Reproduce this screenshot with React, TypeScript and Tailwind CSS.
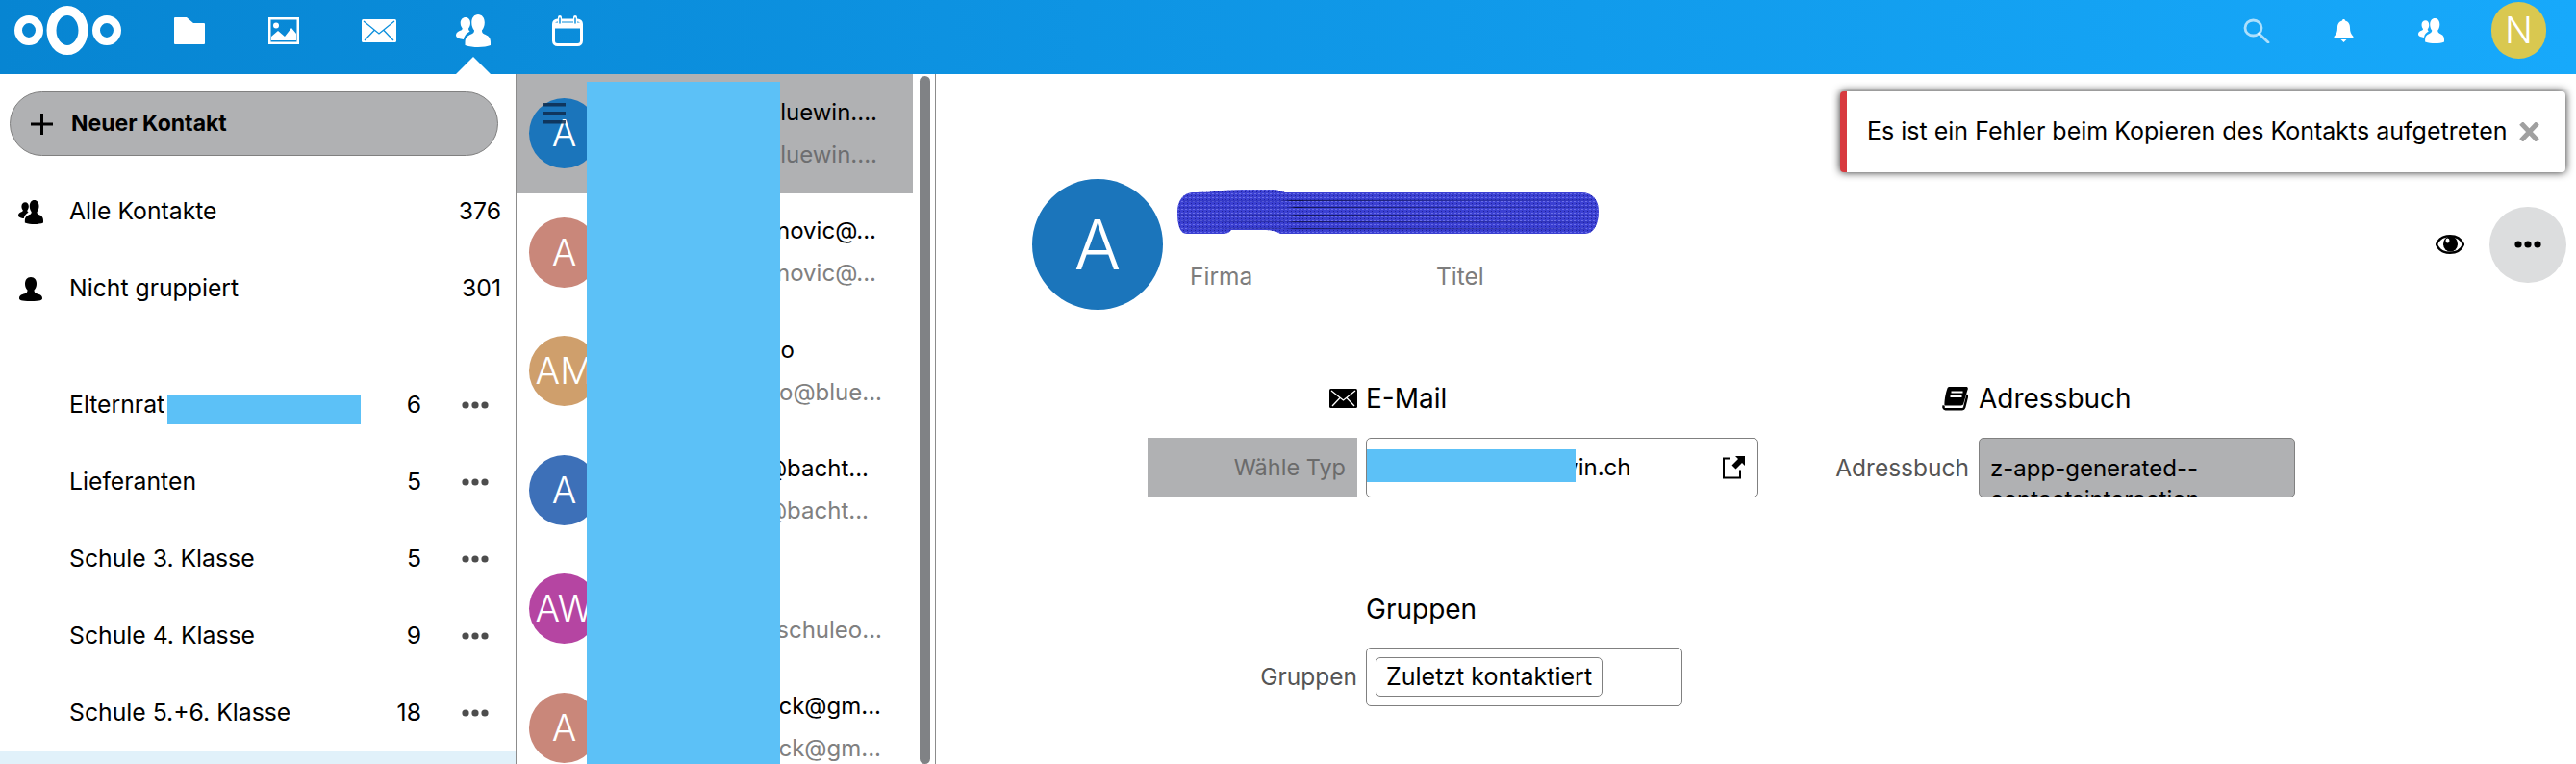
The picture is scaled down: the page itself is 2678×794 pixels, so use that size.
const groups = [
  { name: "Elternrat", count: 6, redacted: true },
  { name: "Lieferanten", count: 5 },
  { name: "Schule 3. Klasse", count: 5 },
  { name: "Schule 4. Klasse", count: 9 },
  { name: "Schule 5.+6. Klasse", count: 18 },
];

const contacts = [
  { initials: "A", color: "bg-[#1b75bb]", top: "bluewin....", topPad: "pr-[37px]", sub: "bluewin....", subPad: "pr-[37px]", selected: true },
  { initials: "A", color: "bg-[#c9877a]", top: "novic@...", topPad: "pr-[38px]", sub: "novic@...", subPad: "pr-[38px]" },
  { initials: "AM", color: "bg-[#cf9f6c]", top: "o", topPad: "pr-[123px]", sub: "o@blue...", subPad: "pr-[32px]" },
  { initials: "A", color: "bg-[#3d70b8]", top: "@bacht...", topPad: "pr-[46px]", sub: "@bacht...", subPad: "pr-[46px]" },
  { initials: "AW", color: "bg-[#b545a2]", top: "", topPad: "", sub: "schuleo...", subPad: "pr-[32px]" },
  { initials: "A", color: "bg-[#c9877a]", top: "ck@gm...", topPad: "pr-[33px]", sub: "ck@gm...", subPad: "pr-[33px]" },
];

function Logo() {
  return (
    <svg width="111" height="51" viewBox="0 0 111 51" fill="none" stroke="white">
      <ellipse cx="15" cy="25.5" rx="11" ry="11.5" strokeWidth="8" />
      <ellipse cx="55" cy="25.5" rx="16.5" ry="20.5" strokeWidth="10" />
      <ellipse cx="96" cy="25.5" rx="11" ry="11.5" strokeWidth="8" />
    </svg>
  );
}

function ContactsIcon({ w, h, fill = "white" }: { w: number; h: number; fill?: string }) {
  return (
    <svg width={w} height={h} viewBox="0 0 36 34" preserveAspectRatio="none" fill={fill}>
      <path d="M23 0c4 0 6.800 3.500 6.800 8.500 0 3.500-1.200 6-2.800 8 0 2 .5 3 2.500 4 3.500 1.400 6.500 3 6.500 8.500V32c-3 1.300-8 2-13 2-4.500 0-9-.5-13.500-2v-3c0-5 3-7 6.500-8.500 2.200-1 3-2 3-4-1.600-2-2.700-4.500-2.700-8C16.300 3.500 19 0 23 0z" />
      <path d="M10 3c3 0 5 2.400 5 6 0 2.400-.9 4.300-2 5.700 0 1.300.5 2 1.600 2.700-3 1.800-6.100 4.200-6.600 8.600-3.500-.5-8-1.500-8-4.500 0-2.500 2.400-3.800 4.400-4.700 1.700-.7 2.300-1.300 2.300-2.400-1.100-1.400-2-3.300-2-5.700C4.700 5.400 7 3 10 3z" />
    </svg>
  );
}

function Dots({ color = "#4d4d4d" }: { color?: string }) {
  return (
    <svg width="28" height="8" viewBox="0 0 28 8" fill={color}>
      <ellipse cx="4" cy="4" rx="3.600" ry="3.600" />
      <ellipse cx="14" cy="4" rx="3.600" ry="3.600" />
      <ellipse cx="24" cy="4" rx="3.600" ry="3.600" />
    </svg>
  );
}

function TopBar() {
  return (
    <header className="relative flex h-[77px] shrink-0 items-center bg-linear-to-r from-[#0785d2] to-[#17a9fb] pb-[14px] pl-[15px] pr-[31px]">
      <Logo />
      <nav className="ml-[55px] flex items-center">
        <svg width="32" height="28" viewBox="0 0 32 28" fill="white">
          <path d="M0 1a1 1 0 0 1 1-1h12l7 6h11a1 1 0 0 1 1 1v20a1 1 0 0 1-1 1H1a1 1 0 0 1-1-1z" />
        </svg>
        <svg className="ml-[66px]" width="32" height="28" viewBox="0 0 32 28" fill="white">
          <path fillRule="evenodd" d="M0 0h32v28H0zM2.500 2.500v23h27v-23z" />
          <ellipse cx="8" cy="8.500" rx="3" ry="3" />
          <path d="M3 24v-4l7-6 7 6 7-9 5 6v7z" />
        </svg>
        <svg className="ml-[65px]" width="36" height="24" viewBox="0 0 36 24" fill="white" stroke="#0b8fdd" strokeWidth="1.300">
          <rect x="0" y="0" width="36" height="24" rx="1.500" stroke="none" />
          <path d="M2 2l16 13L34 2M3 22l10.500-11M33 22L22.500 11" fill="none" />
        </svg>
        <div className="ml-[62px] flex">
          <ContactsIcon w={36} h={34} />
        </div>
        <svg className="ml-[64px]" width="32" height="32" viewBox="0 0 32 32" fill="none" stroke="white">
          <rect x="1.500" y="5" width="29" height="25.500" rx="4" strokeWidth="3" />
          <path d="M1.500 10.500h29" strokeWidth="6" />
          <path d="M8 2v7M24 2v7" stroke="white" strokeWidth="4" strokeLinecap="round" />
          <path d="M8 3v5M24 3v5" stroke="#0d93e0" strokeWidth="1.500" strokeLinecap="round" />
        </svg>
      </nav>
      <div className="absolute bottom-0 left-[474px] h-[18px] w-[36px] bg-white [clip-path:polygon(50%_0,100%_100%,0_100%)]" />
      <div className="ml-auto flex items-center">
        <svg width="28" height="26" viewBox="0 0 28 26" fill="none" stroke="white" strokeOpacity="0.65" strokeWidth="2.800">
          <ellipse cx="10.500" cy="10" rx="8.500" ry="8" />
          <path d="M16.500 16l9.500 9" strokeLinecap="round" />
        </svg>
        <svg className="ml-[66px]" width="21" height="24" viewBox="0 0 21 24" fill="white">
          <path d="M10.500 0c1 0 1.500.7 1.500 1.600 3.600.8 5 3.800 5 7.400 0 4 1 6 3.500 9v1H.5v-1C3 15 4 13 4 9c0-3.600 1.400-6.600 5-7.400C9 .7 9.500 0 10.500 0z" />
          <path d="M7.500 21h6l-3 3z" />
        </svg>
        <div className="ml-[67px] flex">
          <ContactsIcon w={27} h={26} />
        </div>
        <div className="ml-[49px] flex h-[59px] w-[57px] items-center justify-center rounded-full bg-[#d9c850] text-[38px] font-light text-white">
          N
        </div>
      </div>
    </header>
  );
}

function Sidebar() {
  return (
    <aside className="flex w-[537px] shrink-0 flex-col border-r border-[#8c8c8c] text-[24.750px] text-black">
      <button className="mx-[10px] mt-[18px] flex h-[67px] w-[508px] items-center rounded-full border border-[#808080] bg-[#b0b1b3] pl-[21px] font-bold">
        <svg width="23" height="22" viewBox="0 0 23 22" stroke="black" strokeWidth="3">
          <path d="M0 11h23M11.500 0v22" />
        </svg>
        <span className="ml-[19px] text-[23px]">Neuer Kontakt</span>
      </button>
      <div className="mt-[18px] flex h-[80px] items-center pl-[19px] pr-[15px]">
        <ContactsIcon w={26} h={25} fill="black" />
        <span className="ml-[27px] flex-1">Alle Kontakte</span>
        <span>376</span>
      </div>
      <div className="flex h-[80px] items-center pl-[20px] pr-[15px]">
        <svg width="24" height="25" viewBox="0 0 24 25" fill="black">
          <path d="M12 0c4 0 6 3 6 7 0 3-1 5-2.500 6.500 0 2 .5 3 3 3.800C21.500 18.200 24 19 24 22c0 2-1.500 3-12 3S0 24 0 22c0-3 2.500-3.800 5.500-4.700 2.500-.8 3-1.800 3-3.800C7 12 6 10 6 7c0-4 2-7 6-7z" />
        </svg>
        <span className="ml-[28px] flex-1">Nicht gruppiert</span>
        <span>301</span>
      </div>
      <div className="mt-[41px]">
        {groups.map((g) => (
          <div key={g.name} className="flex h-[80px] items-center pl-[72px]">
            <span>{g.name}</span>
            {g.redacted && <div className="ml-[3px] mt-[9px] h-[31px] w-[201px] bg-[#5cc1f7]" />}
            <span className="ml-auto">{g.count}</span>
            <div className="ml-[42px] mr-[28px] flex">
              <Dots />
            </div>
          </div>
        ))}
      </div>
      <div className="min-h-0 flex-1 bg-[#e1f1fa]" />
    </aside>
  );
}

function ContactList() {
  return (
    <section className="relative flex w-[436px] shrink-0 overflow-hidden border-r border-[#8c8c8c] text-[24px]">
      <div className="w-[412px] shrink-0">
        {contacts.map((c, i) => (
          <div key={i} className={`flex h-[123.500px] items-center pl-[13px] ${c.selected ? "bg-[#b0b1b3]" : ""}`}>
            <div className={`flex h-[73px] w-[73px] shrink-0 items-center justify-center rounded-full text-[38px] font-light text-white ${c.color}`}>
              {c.initials}
            </div>
            <div className="min-w-0 flex-1 overflow-hidden whitespace-nowrap text-right leading-[44px]">
              <div className={`h-[44px] text-black ${c.topPad}`}>{c.top}</div>
              <div className={`h-[44px] ${c.selected ? "text-[#6d6e70]" : "text-[#808080]"} ${c.subPad}`}>{c.sub}</div>
            </div>
          </div>
        ))}
      </div>
      <div className="ml-[7px] mt-[2px] w-[11px] rounded-full bg-[#808285]" />
      {/* redaction + app-navigation toggle sit on top of the list */}
      <div className="absolute bottom-0 left-[73px] top-[8px] w-[201px] bg-[#5cc1f7]" />
      <svg className="absolute left-[28px] top-[30px]" width="23" height="22" viewBox="0 0 23 22" fill="#0d2c4d" fillOpacity="0.85">
        <rect y="0" width="23" height="3.500" />
        <rect y="9" width="23" height="3.500" />
        <rect y="18" width="23" height="3.500" />
      </svg>
    </section>
  );
}

function Scribble() {
  return (
    <svg width="438" height="47" viewBox="0 0 438 47">
      <defs>
        <pattern id="scribble-grain" width="4" height="4" patternUnits="userSpaceOnUse">
          <rect width="2" height="1" fill="#6a6ee6" />
          <rect x="2" y="2" width="1" height="1" fill="#1f2199" />
        </pattern>
      </defs>
      <path
        d="M15 3C30 3 40 2 46 1 65 0 90-1 102 0l10 3h308c12 0 18 8 18 20 0 14-6 23-14 23H107c-5-3-10-4-15-4H56c-2 3-5 4-10 4H10C2 46 0 35 0 23 0 12 6 4 15 3z"
        fill="#3b40d2"
      />
      <path
        d="M15 3C30 3 40 2 46 1 65 0 90-1 102 0l10 3h308c12 0 18 8 18 20 0 14-6 23-14 23H107c-5-3-10-4-15-4H56c-2 3-5 4-10 4H10C2 46 0 35 0 23 0 12 6 4 15 3z"
        fill="url(#scribble-grain)"
      />
      <g stroke="#2a2db0" strokeWidth="1.200" strokeOpacity="0.7">
        <path d="M6 12h100l12-1h312M2 19h110l10-1h312M2 26h110l10 1h312M4 33h105l12 1h312M12 40h95l14 1h304" />
      </g>
    </svg>
  );
}

function DetailsView() {
  return (
    <main className="relative min-w-0 flex-1 text-[24.500px] text-black">
      <div className="flex items-center pl-[100px] pr-[10px] pt-[109px]">
        <div className="flex h-[136px] w-[136px] items-center justify-center rounded-full bg-[#1b75bb] text-[72px] font-light text-white">
          A
        </div>
        <div className="ml-[15px] flex flex-col self-start pt-[11px]">
          <Scribble />
          <div className="mt-[25px] flex pl-[13px] text-[#7d7d7d]">
            <span className="w-[256px]">Firma</span>
            <span>Titel</span>
          </div>
        </div>
        <div className="ml-auto flex items-center">
          <svg width="30" height="20" viewBox="0 0 30 20">
            <path d="M15 1.200C22 1.200 27 5 29 10c-2 5-7 8.800-14 8.800S3 15 1 10C3 5 8 1.200 15 1.200z" fill="white" stroke="black" strokeWidth="2.400" />
            <ellipse cx="15.500" cy="9.500" rx="7.500" ry="8" fill="black" />
            <ellipse cx="12.500" cy="6" rx="2" ry="2.500" fill="white" />
          </svg>
          <div className="ml-[26px] flex h-[79px] w-[80px] items-center justify-center rounded-full bg-[#dcddde]">
            <Dots color="black" />
          </div>
        </div>
      </div>

      <div className="mt-[72px] flex pl-[220px]">
        <div className="grid grid-cols-[218px_408px] gap-x-[9px]">
          <div className="flex h-[40px] items-center justify-end">
            <svg width="29" height="20" viewBox="0 0 29 20">
              <rect width="29" height="20" rx="1.500" fill="black" />
              <path d="M2 2l12.500 10L27 2M3 18l8-8.500M26 18l-8-8.500" stroke="white" strokeWidth="1.300" fill="none" />
            </svg>
          </div>
          <div className="flex h-[40px] items-center text-[28px]">E-Mail</div>
          <div className="mt-[21px] flex h-[62px] items-center justify-end bg-[#b0b1b3] pr-[12px] text-[23.500px] text-[#6b6b6b]">Wähle Typ</div>
          <div className="relative mt-[21px] flex h-[62px] items-center rounded-[5px] border border-[#808080] pl-[200px] text-[24px]">
            <span>win.ch</span>
            <svg className="absolute left-[369px] top-[17px]" width="25" height="25" viewBox="0 0 25 25" fill="none">
              <path d="M9 3.500H2v20h17v-8" stroke="black" strokeWidth="2" />
              <path d="M14 1h10v10l-3-3-6.500 6.500-4-4L17 4z" fill="black" />
            </svg>
            <div className="absolute left-0 top-[11px] h-[34px] w-[217px] bg-[#5cc1f7]" />
          </div>

          <div className="mt-[96px]" />
          <div className="mt-[96px] flex h-[40px] items-center text-[28px]">Gruppen</div>
          <div className="mt-[20px] flex h-[61px] items-center justify-end text-[#555555]">Gruppen</div>
          <div className="mt-[20px] flex h-[61px] w-[329px] items-center rounded-[5px] border border-[#808080] pl-[9px]">
            <span className="flex h-[41px] items-center rounded-[5px] border border-[#808080] px-[10px] text-[25px]">Zuletzt kontaktiert</span>
          </div>
        </div>

        <div className="ml-[81px] grid grid-cols-[138px_329px] gap-x-[10px] self-start">
          <div className="flex h-[40px] items-center justify-end pr-[1px]">
            <svg width="27" height="25" viewBox="0 0 27 25" fill="none">
              <path d="M7.500 0H25c1.500 0 2 1 1.700 2.200l-4.500 15.600c-.4 1.300-1.200 1.700-2.500 1.700H2.500C2 15 4 5 5.500 1.500 6 .5 6.500 0 7.500 0z" fill="black" />
              <path d="M9.500 5.500h12M8.500 10h12" stroke="white" strokeWidth="2.200" />
              <path d="M1.800 19.500c-.8 1.500-.3 3.700 1.700 3.700h17.500c1.200 0 1.800-.6 2.200-1.800L26.500 8" stroke="black" strokeWidth="2.400" />
            </svg>
          </div>
          <div className="flex h-[40px] items-center text-[28px]">Adressbuch</div>
          <div className="mt-[21px] flex h-[62px] items-center justify-end whitespace-nowrap text-[#555555]">Adressbuch</div>
          <div className="mt-[21px] h-[62px] overflow-hidden rounded-[5px] border border-[#808080] bg-[#b0b1b3] px-[11px] pt-[15px] text-[24px] leading-[32px]">
            z-app-generated--contactsinteraction
          </div>
        </div>
      </div>

      {/* toast */}
      <div className="absolute right-[11px] top-[18px] flex h-[84px] w-[754px] items-center rounded-[4px] border-l-[7px] border-[#d83a3f] bg-white pl-[21px] shadow-[0_0_8px_rgba(0,0,0,0.85)]">
        <span className="whitespace-nowrap text-[25px]">Es ist ein Fehler beim Kopieren des Kontakts aufgetreten</span>
        <svg className="ml-[12px]" width="21" height="20" viewBox="0 0 21 20" stroke="#a0a0a0" strokeWidth="5">
          <path d="M2 1l17 18M19 1L2 19" />
        </svg>
      </div>
    </main>
  );
}

export default function App() {
  return (
    <div className="flex h-screen flex-col overflow-hidden bg-white font-[Inter,sans-serif]">
      <TopBar />
      <div className="flex min-h-0 flex-1">
        <Sidebar />
        <ContactList />
        <DetailsView />
      </div>
    </div>
  );
}
